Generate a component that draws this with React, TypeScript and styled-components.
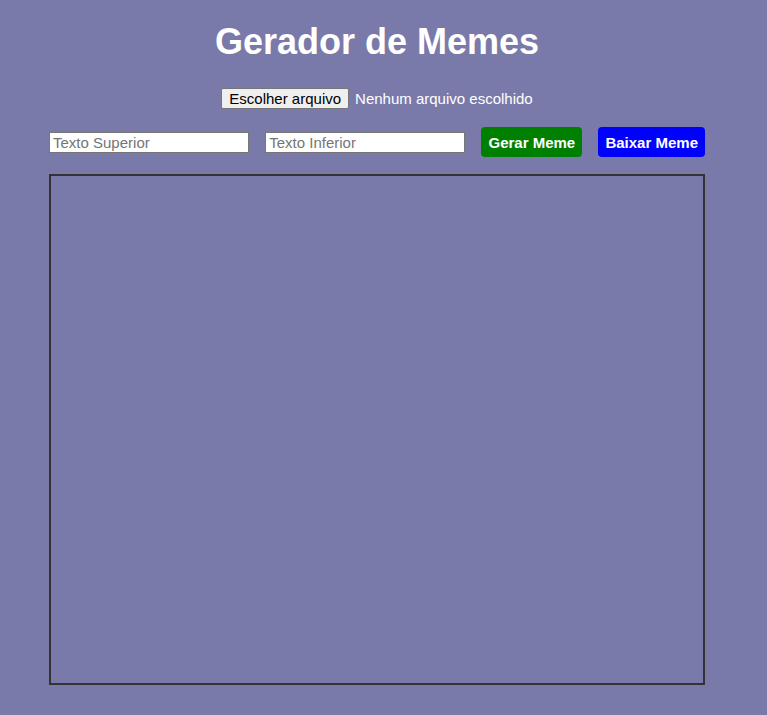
import React from "react";
import styled, { createGlobalStyle } from "styled-components";

const GlobalStyle = createGlobalStyle`
  html, body {
    margin: 0;
    padding: 0;
    background: #797aaa;
    font-family: "Liberation Sans", Arial, sans-serif;
    color: #ffffff;
  }
  body {
    min-height: 715px;
  }
`;

const Page = styled.div`
  width: 656px;
  margin-left: 49px;
  padding-top: 21px;
  display: flex;
  flex-direction: column;
  align-items: center;
`;

const Title = styled.h1`
  margin: 0;
  font-size: 36px;
  font-weight: bold;
  line-height: normal;
  color: #ffffff;
`;

const FileRow = styled.div`
  margin-top: 25px;
  display: flex;
  align-items: center;
  gap: 6px;
  font-size: 15px;
`;

const FileButton = styled.button`
  height: 21px;
  padding: 0 7px;
  border: 1px solid #767676;
  border-radius: 2px;
  background: #efefef;
  color: #000000;
  font-family: "Liberation Sans", Arial, sans-serif;
  font-size: 15px;
  line-height: 17px;
  cursor: pointer;
`;

const FileLabel = styled.span`
  color: #ffffff;
  font-size: 15px;
`;

const Controls = styled.div`
  margin-top: 18px;
  width: 100%;
  display: flex;
  align-items: center;
  justify-content: space-between;
  height: 30px;
`;

const TextInput = styled.input`
  box-sizing: border-box;
  width: 200px;
  height: 21px;
  padding: 1px 3px;
  border: 1px solid #767676;
  border-radius: 0;
  background: #ffffff;
  font-family: "Liberation Sans", Arial, sans-serif;
  font-size: 15px;
  color: #000000;
  outline: none;
  &::placeholder {
    color: #757575;
  }
`;

const ActionButton = styled.button<{ $bg: string }>`
  height: 30px;
  padding: 0 7px;
  border: none;
  border-radius: 4px;
  background: ${(p) => p.$bg};
  color: #ffffff;
  font-family: "Liberation Sans", Arial, sans-serif;
  font-size: 15px;
  font-weight: bold;
  cursor: pointer;
`;

const MemeCanvas = styled.canvas`
  display: block;
  box-sizing: border-box;
  margin-top: 17px;
  width: 656px;
  height: 511px;
  border: 2px solid #333333;
`;

export default function App() {
  return (
    <>
      <GlobalStyle />
      <Page>
        <Title>Gerador de Memes</Title>
        <FileRow>
          <FileButton type="button">Escolher arquivo</FileButton>
          <FileLabel>Nenhum arquivo escolhido</FileLabel>
        </FileRow>
        <Controls>
          <TextInput type="text" placeholder="Texto Superior" />
          <TextInput type="text" placeholder="Texto Inferior" />
          <ActionButton $bg="#008000">Gerar Meme</ActionButton>
          <ActionButton $bg="#0000ff">Baixar Meme</ActionButton>
        </Controls>
        <MemeCanvas width={652} height={507} />
      </Page>
    </>
  );
}
